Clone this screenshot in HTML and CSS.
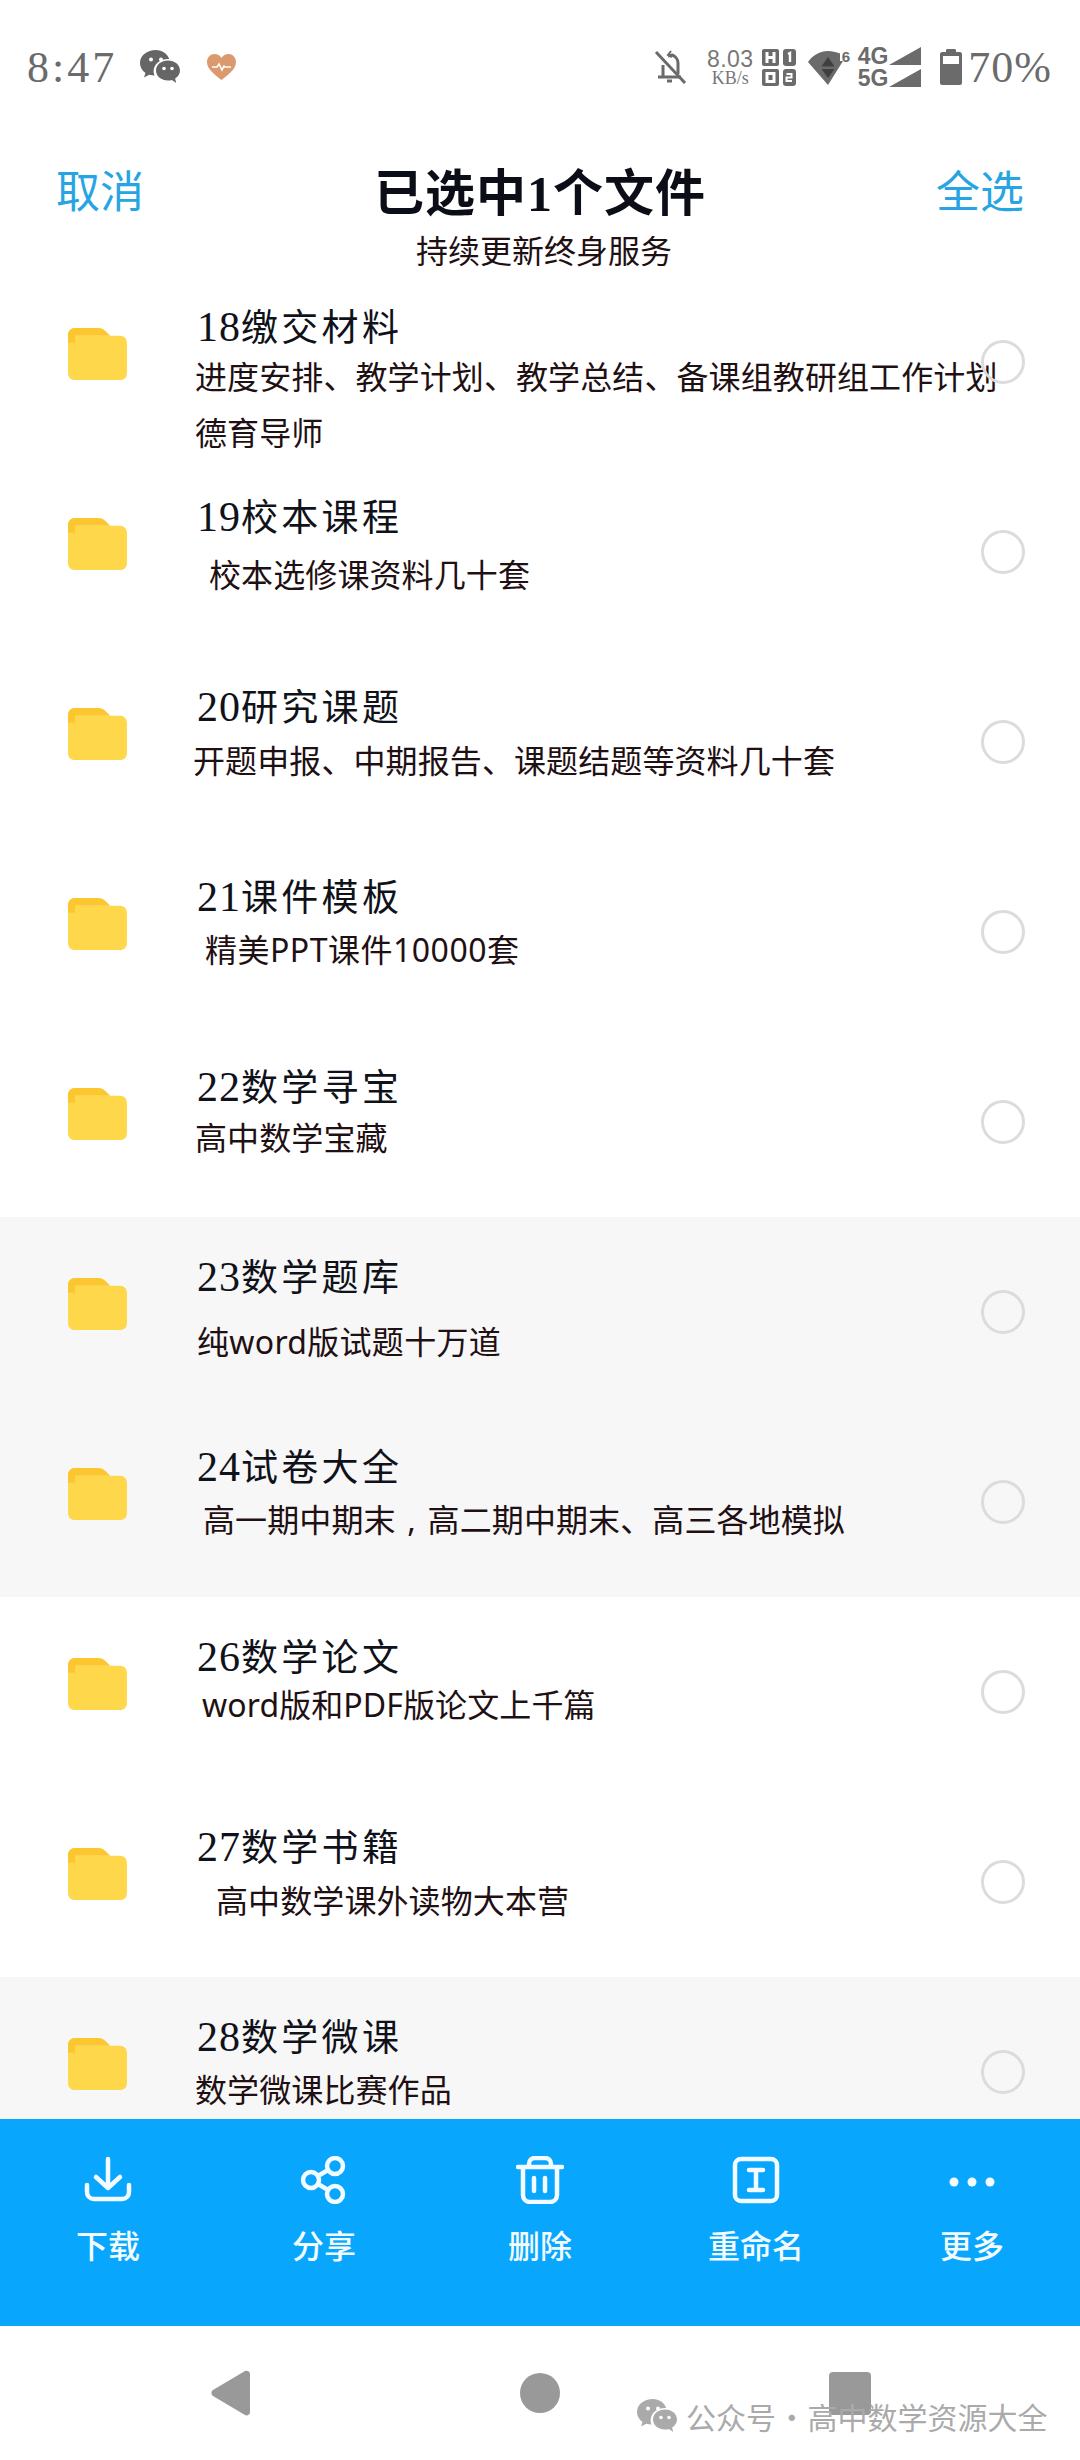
FILE: index.html
```html
<!DOCTYPE html>
<html lang="zh-CN">
<head>
  <meta charset="UTF-8">
  <meta name="viewport" content="width=device-width, initial-scale=1.0">
  <title>已选中1个文件</title>
  <link rel="stylesheet" href="styles.css">
</head>
<body>
  <svg class="defs" width="0" height="0">
    <symbol id="folder" viewBox="0 0 60 53">
      <path d="M0 7C0 3 3 0 7 0h4c-4 0-4 3-4 8h46c4 0 7 3 7 7v31c0 4-3 7-7 7H7c-4 0-7-3-7-7z" fill="#ffd74b"/>
      <path d="M0 15h7V8h36l-5-5c-2-2-4-3-7-3H7C3 0 0 3 0 7z" fill="#fcc62f"/>
    </symbol>
    <symbol id="wechat" viewBox="0 0 40 34">
      <path d="M16 0C7 0 0 5.500 0 13c0 4 2 7.500 5.500 10L4 27.500l5.200-2.700c1.800.5 3.500.8 5.300.8-.6-1.400-.9-2.900-.9-4.300 0-7 6.400-12.300 14.400-12.300h1.200C27.400 3.500 22 0 16 0z" fill="currentColor"/>
      <path d="M28 10.500c-6.600 0-12 4.300-12 10s5.400 10 12 10c1.300 0 2.700-.2 3.900-.6l4.300 3.100-1.100-4.400c3-1.900 4.900-4.800 4.900-8.100 0-5.700-5.400-10-12-10z" fill="currentColor"/>
      <circle cx="11" cy="9.500" r="2" fill="#fff"/><circle cx="21" cy="9.500" r="2" fill="#fff"/>
      <circle cx="24" cy="18.500" r="1.800" fill="#fff"/><circle cx="32" cy="18.500" r="1.800" fill="#fff"/>
    </symbol>
  </svg>

  <div class="phone">
    <div class="statusbar">
      <div class="status-left">
        <span class="time">8:47</span>
        <svg class="ic-wechat"><use href="#wechat"/></svg>
        <svg class="ic-heart" viewBox="0 0 29 26">
          <path d="M14.500 26C10 22 0 16 0 8c0-4.500 3.500-8 7.500-8 3 0 5.500 1.500 7 4 1.500-2.500 4-4 7-4C25.500 0 29 3.500 29 8c0 8-10 14-14.500 18z" fill="#da9a6e"/>
          <path d="M5 13h5l2-3 3 6 2-4 1 1h6" fill="none" stroke="#fff" stroke-width="1.600"/>
        </svg>
      </div>
      <div class="status-right">
        <svg class="ic-bell" viewBox="0 0 33 35" fill="none" stroke="#6b6b6b" stroke-width="3">
          <path d="M2 2l29 31"/>
          <path d="M4 27h23M9 27V15M24 24V13c0-4-3-7-6-8l-4 1"/>
          <path d="M17 1l-3 4 4 2" stroke-width="2"/>
          <path d="M13 31h5" stroke-width="3"/>
        </svg>
        <div class="speed"><span class="speed-num">8.03</span><span class="speed-unit">KB/s</span></div>
        <svg class="ic-sim" viewBox="0 0 34 37">
          <rect width="17" height="17" rx="2" fill="#6b6b6b"/>
          <rect y="20" width="17" height="17" rx="2" fill="#6b6b6b"/>
          <rect x="21" width="13" height="17" rx="3" fill="#6b6b6b"/>
          <rect x="21" y="20" width="13" height="17" rx="3" fill="#6b6b6b"/>
          <path d="M5 3v11M12 3v11M5 8.500h7" stroke="#fff" stroke-width="3"/>
          <rect x="5" y="24.500" width="7" height="8" fill="none" stroke="#fff" stroke-width="3"/>
          <path d="M26 5l2-1v9" fill="none" stroke="#fff" stroke-width="2.400"/>
          <path d="M24.500 25h5v3.500h-5v3.500h5.500" fill="none" stroke="#fff" stroke-width="2"/>
        </svg>
        <svg class="ic-wifi" viewBox="0 0 41 36">
          <path d="M0 13C5 6 12 2 20 2c4 0 8 1 12 2.500V12h3L20 36z" fill="#6b6b6b"/>
          <path d="M20 8l6.500 9.500h-13z" fill="#3f3f3f"/>
          <path d="M20 29l6.500-9h-13z" fill="#3f3f3f"/>
        </svg>
        <span class="wifi-six">6</span>
        <div class="net"><span>4G</span><span>5G</span></div>
        <div class="bars">
          <svg class="ic-bar" viewBox="0 0 32 18"><path d="M0 18L32 0v18z" fill="#6b6b6b"/></svg>
          <svg class="ic-bar" viewBox="0 0 32 18"><path d="M0 18L32 0v18z" fill="#6b6b6b"/></svg>
        </div>
        <svg class="ic-battery" viewBox="0 0 22 36">
          <path d="M6 3V1.500C6 .700 6.700 0 7.500 0h7c.8 0 1.500.7 1.500 1.500V3h4c1 0 2 1 2 2v29c0 1-1 2-2 2H2c-1 0-2-1-2-2V5c0-1 1-2 2-2z" fill="#6b6b6b"/>
          <rect x="3" y="7" width="16" height="8" fill="#fff"/>
        </svg>
        <span class="percent">70%</span>
      </div>
    </div>

    <div class="header">
      <span class="link">取消</span>
      <div class="header-mid">
        <div class="header-title">已选中<span class="header-one">1</span>个文件</div>
        <div class="header-sub">持续更新终身服务</div>
      </div>
      <span class="link">全选</span>
    </div>

    <div class="list">
      <div class="row r18">
        <svg class="folder"><use href="#folder"/></svg>
        <div class="row-text">
          <div class="row-title"><span class="num">18</span>缴交材料</div>
          <div class="row-desc">进度安排、教学计划、教学总结、备课组教研组工作计划<br>德育导师</div>
        </div>
        <span class="radio"></span>
      </div>
      <div class="row r19">
        <svg class="folder"><use href="#folder"/></svg>
        <div class="row-text">
          <div class="row-title"><span class="num">19</span>校本课程</div>
          <div class="row-desc">校本选修课资料几十套</div>
        </div>
        <span class="radio"></span>
      </div>
      <div class="row r20">
        <svg class="folder"><use href="#folder"/></svg>
        <div class="row-text">
          <div class="row-title"><span class="num">20</span>研究课题</div>
          <div class="row-desc">开题申报、中期报告、课题结题等资料几十套</div>
        </div>
        <span class="radio"></span>
      </div>
      <div class="row r21">
        <svg class="folder"><use href="#folder"/></svg>
        <div class="row-text">
          <div class="row-title"><span class="num">21</span>课件模板</div>
          <div class="row-desc">精美PPT课件10000套</div>
        </div>
        <span class="radio"></span>
      </div>
      <div class="row r22">
        <svg class="folder"><use href="#folder"/></svg>
        <div class="row-text">
          <div class="row-title"><span class="num">22</span>数学寻宝</div>
          <div class="row-desc">高中数学宝藏</div>
        </div>
        <span class="radio"></span>
      </div>
      <div class="row row-grey r23">
        <svg class="folder"><use href="#folder"/></svg>
        <div class="row-text">
          <div class="row-title"><span class="num">23</span>数学题库</div>
          <div class="row-desc">纯word版试题十万道</div>
        </div>
        <span class="radio"></span>
      </div>
      <div class="row row-grey r24">
        <svg class="folder"><use href="#folder"/></svg>
        <div class="row-text">
          <div class="row-title"><span class="num">24</span>试卷大全</div>
          <div class="row-desc">高一期中期末<span class="comma">,</span>高二期中期末、高三各地模拟</div>
        </div>
        <span class="radio"></span>
      </div>
      <div class="row r26">
        <svg class="folder"><use href="#folder"/></svg>
        <div class="row-text">
          <div class="row-title"><span class="num">26</span>数学论文</div>
          <div class="row-desc">word版和PDF版论文上千篇</div>
        </div>
        <span class="radio"></span>
      </div>
      <div class="row r27">
        <svg class="folder"><use href="#folder"/></svg>
        <div class="row-text">
          <div class="row-title"><span class="num">27</span>数学书籍</div>
          <div class="row-desc">高中数学课外读物大本营</div>
        </div>
        <span class="radio"></span>
      </div>
      <div class="row row-grey r28">
        <svg class="folder"><use href="#folder"/></svg>
        <div class="row-text">
          <div class="row-title"><span class="num">28</span>数学微课</div>
          <div class="row-desc">数学微课比赛作品</div>
        </div>
        <span class="radio"></span>
      </div>
    </div>

    <div class="toolbar">
      <div class="tool">
        <svg class="tool-icon" viewBox="0 0 48 48">
          <path d="M24 3v29M12 21l12 11 12-11M3 29v7c0 4 3 7 7 7h28c4 0 7-3 7-7v-7"/>
        </svg>
        <span>下载</span>
      </div>
      <div class="tool">
        <svg class="tool-icon" viewBox="0 0 48 48">
          <circle cx="11" cy="24" r="8"/><circle cx="35" cy="10" r="8"/><circle cx="35" cy="38" r="8"/>
          <path d="M18 20l10-6M18 28l10 6"/>
        </svg>
        <span>分享</span>
      </div>
      <div class="tool">
        <svg class="tool-icon" viewBox="0 0 48 48">
          <path d="M2 11h44M13 11V8c0-4 3-6 6-6h10c3 0 6 2 6 6v3M7 11v28c0 4 3 7 7 7h20c4 0 7-3 7-7V11M18 22v13M29 22v13"/>
        </svg>
        <span>删除</span>
      </div>
      <div class="tool">
        <svg class="tool-icon" viewBox="0 0 48 48">
          <rect x="3" y="3" width="42" height="42" rx="6"/>
          <path d="M17 14h14M17 34h14M24 14v20"/>
        </svg>
        <span>重命名</span>
      </div>
      <div class="tool">
        <svg class="tool-icon tool-dots" viewBox="0 0 48 48">
          <circle cx="6" cy="26" r="4.500"/><circle cx="24" cy="26" r="4.500"/><circle cx="42" cy="26" r="4.500"/>
        </svg>
        <span>更多</span>
      </div>
    </div>

    <div class="navbar">
      <div class="nav-cell">
        <svg class="nav-back" viewBox="0 0 39 46"><path d="M2 20L34 1c2-1 5 0 5 3v38c0 3-3 4-5 3L2 26c-2-1-2-5 0-6z" fill="#999"/></svg>
      </div>
      <div class="nav-cell"><span class="nav-home"></span></div>
      <div class="nav-cell"><span class="nav-recent"></span></div>
      <div class="watermark">
        <svg class="ic-wechat-mark"><use href="#wechat"/></svg>
        <span class="watermark-text">公众号 · 高中数学资源大全</span>
      </div>
    </div>
  </div>
</body>
</html>
```

FILE: styles.css
```css
* {
  box-sizing: border-box;
}
body {
  margin: 0;
  background: #fff;
  font-family: "Noto Sans CJK SC", sans-serif;
}
.defs {
  position: absolute;
}
.phone {
  width: 1080px;
  height: 2460px;
  overflow: hidden;
  display: flex;
  flex-direction: column;
  background: #fff;
}

/* status bar */
.statusbar {
  height: 140px;
  flex: none;
  display: flex;
  justify-content: space-between;
  align-items: center;
  padding: 0 28px 6px 27px;
  color: #6b6b6b;
}
.status-left, .status-right {
  display: flex;
  align-items: center;
}
.time {
  font-family: "Liberation Serif", serif;
  font-size: 44px;
  letter-spacing: 3px;
}
.ic-wechat {
  width: 40px;
  height: 34px;
  margin-left: 23px;
  color: #666;
}
.ic-heart {
  width: 29px;
  height: 26px;
  margin-left: 27px;
}
.ic-bell {
  width: 33px;
  height: 35px;
}
.speed {
  display: flex;
  flex-direction: column;
  align-items: center;
  margin-left: 20px;
  line-height: 1;
  color: #777;
}
.speed-num {
  font-family: "Liberation Sans", sans-serif;
  font-size: 23px;
  line-height: 22px;
  letter-spacing: 0.500px;
}
.speed-unit {
  font-family: "Liberation Serif", serif;
  font-size: 18px;
  line-height: 17px;
}
.ic-sim {
  width: 34px;
  height: 37px;
  margin-left: 8px;
}
.ic-wifi {
  width: 41px;
  height: 36px;
  margin-left: 12px;
}
.wifi-six {
  align-self: flex-start;
  font-family: "Liberation Sans", sans-serif;
  font-size: 15px;
  font-weight: 700;
  line-height: 20px;
  margin: 5px 0 0 -7px;
  width: 13px;
}
.net {
  display: flex;
  flex-direction: column;
  font-family: "Liberation Sans", sans-serif;
  font-size: 23px;
  font-weight: 700;
  line-height: 22px;
  margin-left: 3px;
}
.bars {
  display: flex;
  flex-direction: column;
  gap: 4px;
  margin-left: 1px;
}
.ic-bar {
  display: block;
  width: 32px;
  height: 18px;
}
.ic-battery {
  width: 22px;
  height: 36px;
  margin-left: 19px;
}
.percent {
  font-family: "Liberation Serif", serif;
  font-size: 44px;
  letter-spacing: 1px;
  margin-left: 6px;
}

/* header */
.header {
  height: 127px;
  flex: none;
  display: flex;
  justify-content: space-between;
  align-items: flex-start;
  padding: 20px 56px 0;
}
.link {
  font-size: 44px;
  line-height: 58px;
  color: #27a5e2;
}
.header-mid {
  text-align: center;
}
.header-title {
  font-size: 50px;
  line-height: 58px;
  font-weight: 700;
  letter-spacing: 1px;
  color: #0b0d17;
}
.header-one {
  font-family: "Liberation Serif", serif;
}
.header-sub {
  font-size: 32px;
  line-height: 46px;
  margin-top: 3px;
  padding-left: 8px;
  color: #1f1014;
}

/* file list */
.list {
  flex: 1;
  min-height: 0;
  overflow: hidden;
}
.row {
  height: 190px;
  display: flex;
  position: relative;
  align-items: flex-start;
}
.row-grey {
  background: #f7f7f7;
}
.folder {
  width: 59px;
  height: 52px;
  flex: none;
  margin: 61px 0 0 68px;
}
.row-text {
  margin-left: 70px;
  width: 800px;
  flex: none;
  white-space: nowrap;
  padding-top: 35px;
}
.row-title {
  font-size: 37px;
  line-height: 46px;
  letter-spacing: 3.300px;
  color: #10121a;
}
.num {
  font-family: "Liberation Serif", serif;
  font-size: 42px;
  letter-spacing: 1px;
}
.row-desc {
  font-family: "Noto Sans", "Noto Sans CJK SC", sans-serif;
  font-size: 32px;
  line-height: 56px;
  letter-spacing: 0.100px;
  color: #1f1014;
}
.comma {
  display: inline-block;
  width: 32px;
  text-align: center;
}
.radio {
  position: absolute;
  left: 981px;
  top: 73px;
  width: 44px;
  height: 44px;
  border: 3px solid #dcdcdc;
  border-radius: 50%;
}

.r18 .row-desc { margin: -1px 0 0 -2px; }
.r19 .row-desc { margin: 7px 0 0 12px; }
.r20 .row-desc { margin: 3px 0 0 -4px; }
.r21 .row-desc { margin: 2px 0 0 8px; letter-spacing: 0.500px; }
.r22 .row-desc { margin: 0 0 0 -2px; }
.r23 .row-desc { margin: 14px 0 0 0; letter-spacing: 0.300px; }
.r24 .row-desc { margin: 2px 0 0 6px; }
.r26 .row-desc { margin: -3px 0 0 5px; }
.r27 .row-desc { margin: 3px 0 0 19px; }
.r28 .row-desc { margin: 2px 0 0 -2px; }

/* bottom toolbar */
.toolbar {
  height: 207px;
  flex: none;
  display: grid;
  grid-template-columns: repeat(5, 216px);
  background: #08a6fd;
  color: #f2fbff;
}
.tool {
  display: flex;
  flex-direction: column;
  align-items: center;
  padding-top: 37px;
  font-size: 32px;
  font-weight: 500;
  line-height: 46px;
}
.tool-icon {
  width: 48px;
  height: 48px;
  margin-bottom: 17px;
  fill: none;
  stroke: #f2fbff;
  stroke-width: 4.500;
  stroke-linecap: round;
  stroke-linejoin: round;
}
.tool-dots {
  fill: #f2fbff;
  stroke: none;
}

/* nav bar */
.navbar {
  height: 134px;
  flex: none;
  position: relative;
  display: grid;
  grid-template-columns: repeat(3, 310px);
  justify-content: center;
  align-items: center;
}
.nav-cell {
  display: flex;
  justify-content: center;
}
.nav-back {
  width: 39px;
  height: 46px;
}
.nav-home {
  width: 40px;
  height: 40px;
  border-radius: 50%;
  background: #999;
}
.nav-recent {
  width: 42px;
  height: 43px;
  border-radius: 4px;
  background: #999;
}
.watermark {
  position: absolute;
  left: 637px;
  top: 73px;
  display: flex;
  align-items: center;
  gap: 9px;
  font-size: 30px;
  line-height: 34px;
  color: #aaa;
  white-space: nowrap;
}
.watermark-text {
  word-spacing: -6px;
}
.ic-wechat-mark {
  width: 40px;
  height: 34px;
  color: #aaa;
}
```
